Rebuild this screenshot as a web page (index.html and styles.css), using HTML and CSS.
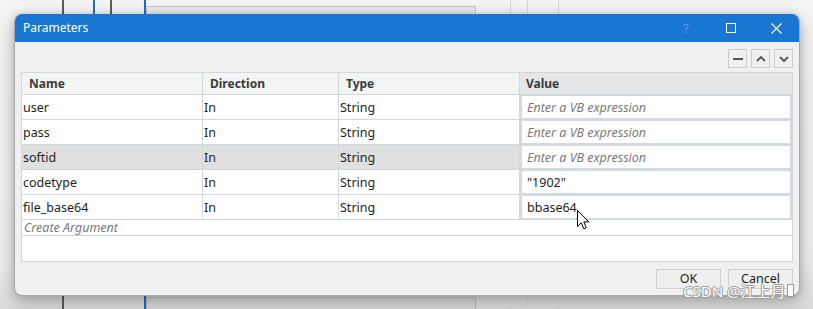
FILE: index.html
```html
<!DOCTYPE html>
<html lang="en">
<head>
  <meta charset="UTF-8">
  <title>Parameters</title>
  <link rel="stylesheet" href="styles.css">
</head>
<body>
  <!-- designer canvas behind the modal -->
  <div class="backdrop">
    <span class="rail dark" style="left:62px"></span>
    <span class="rail blue short" style="left:93px"></span>
    <span class="rail dark short" style="left:110px"></span>
    <span class="rail blue" style="left:144px"></span>
    <span class="panel"></span>
    <span class="panel lower"></span>
    <span class="rail thin" style="left:510px"></span>
    <span class="rail thin" style="left:527px"></span>
    <span class="rail thin" style="left:558px"></span>
  </div>

  <div class="dialog">
    <div class="titlebar">
      <span class="title">Parameters</span>
      <span class="tb-btn help">?</span>
      <span class="tb-btn">
        <svg width="10" height="10" viewBox="0 0 10 10"><rect x="0.5" y="0.5" width="9" height="9" fill="none" stroke="#fff" stroke-width="1"/></svg>
      </span>
      <span class="tb-btn">
        <svg width="11" height="11" viewBox="0 0 11 11"><path d="M0.5 0.5 L10.5 10.5 M10.5 0.5 L0.5 10.5" stroke="#fff" stroke-width="1.1"/></svg>
      </span>
    </div>

    <div class="body">
      <div class="toolbar">
        <button class="tool">
          <svg width="12" height="12" viewBox="0 0 12 12"><path d="M1 6 H11" stroke="#555" stroke-width="2"/></svg>
        </button>
        <button class="tool">
          <svg width="12" height="12" viewBox="0 0 12 12"><path d="M2 8 L6 4 L10 8" fill="none" stroke="#555" stroke-width="1.8"/></svg>
        </button>
        <button class="tool">
          <svg width="12" height="12" viewBox="0 0 12 12"><path d="M2 4 L6 8 L10 4" fill="none" stroke="#555" stroke-width="1.8"/></svg>
        </button>
      </div>

      <div class="grid">
        <div class="cell head">Name</div>
        <div class="cell head">Direction</div>
        <div class="cell head">Type</div>
        <div class="cell head value-head">Value</div>

        <div class="cell">user</div>
        <div class="cell">In</div>
        <div class="cell">String</div>
        <div class="cell val"><div class="expr placeholder">Enter a VB expression</div></div>

        <div class="cell">pass</div>
        <div class="cell">In</div>
        <div class="cell">String</div>
        <div class="cell val"><div class="expr placeholder">Enter a VB expression</div></div>

        <div class="cell sel">softid</div>
        <div class="cell sel">In</div>
        <div class="cell sel">String</div>
        <div class="cell val"><div class="expr placeholder">Enter a VB expression</div></div>

        <div class="cell">codetype</div>
        <div class="cell">In</div>
        <div class="cell">String</div>
        <div class="cell val"><div class="expr">"1902"</div></div>

        <div class="cell">file_base64</div>
        <div class="cell">In</div>
        <div class="cell">String</div>
        <div class="cell val"><div class="expr">bbase64</div></div>

        <div class="create">Create Argument</div>
        <div class="empty"></div>
      </div>

      <div class="footer">
        <button class="btn">OK</button>
        <button class="btn">Cancel</button>
      </div>
    </div>
  </div>

  <svg class="cursor" width="13" height="20" viewBox="0 0 13 20">
    <path d="M0.5 0.5 L0.5 16.5 L4.3 12.8 L6.8 18.8 L9.3 17.8 L6.8 11.9 L11.8 11.9 Z" fill="#fff" stroke="#000" stroke-width="1"/>
  </svg>

  <div class="watermark">CSDN @江上月</div>
</body>
</html>
```

FILE: styles.css
```css
* {
  margin: 0;
  padding: 0;
  box-sizing: border-box;
}

body {
  width: 813px;
  height: 309px;
  overflow: hidden;
  position: relative;
  background: linear-gradient(180deg, #f4f4f4 0%, #eeeeee 85%, #dcdcdc 100%);
  font-family: "Segoe UI", "Noto Sans", "Open Sans", sans-serif;
  font-size: 12px;
  color: #1e1e1e;
}

/* background canvas */
.backdrop {
  position: absolute;
  inset: 0;
  overflow: hidden;
}

.rail {
  position: absolute;
  top: 0;
  bottom: 0;
  width: 2px;
}

.rail.short { bottom: auto; height: 20px; }
.rail.dark { background: #5a5a5a; }
.rail.blue { background: #1c6fc8; }
.rail.thin { width: 1px; background: #d8d8d8; }

.panel {
  position: absolute;
  left: 146px;
  top: 6px;
  width: 330px;
  height: 40px;
  background: #e9e9e9;
  border: 1px solid #c2c7cc;
}

.panel.lower {
  top: 297px;
  height: 12px;
  border-bottom: none;
  background: #d9d9d9;
  border-color: #b9bdc1;
}

/* dialog */
.dialog {
  position: absolute;
  left: 14px;
  top: 14px;
  width: 786px;
  height: 282px;
  background: #f0f0f0;
  border: 1px solid #a9a9a9;
  border-top: none;
  border-radius: 8px;
  overflow: hidden;
  box-shadow: 0 6px 18px rgba(0, 0, 0, 0.28), 0 0 6px rgba(0, 0, 0, 0.12);
}

.titlebar {
  height: 28px;
  background: #1976d2;
  color: #fff;
  display: flex;
  align-items: center;
  padding-left: 8px;
}

.title {
  flex: 1;
  font-size: 12px;
  padding-bottom: 1px;
}

.tb-btn {
  width: 44px;
  height: 28px;
  display: flex;
  align-items: center;
  justify-content: center;
}

.tb-btn.help {
  color: #5c9ee3;
  font-size: 13px;
  width: 38px;
  margin-right: 4px;
}

.tb-btn:last-child {
  width: 46px;
  margin-right: 0;
}

.body {
  padding: 7px 6px 0 6px;
}

.toolbar {
  display: flex;
  justify-content: flex-end;
  gap: 4px;
  height: 19px;
  margin-bottom: 4px;
}

.tool {
  width: 19px;
  height: 19px;
  background: #f0f0f0;
  border: 1px solid #cbcbcb;
  display: flex;
  align-items: center;
  justify-content: center;
}

/* argument grid */
.grid {
  display: grid;
  grid-template-columns: 181px 136px 181px 1fr;
  border: 1px solid #d0d7dd;
  background: #fff;
  height: 190px;
  align-content: start;
  font-size: 12.5px;
}

.cell {
  height: 25px;
  border-right: 1px solid #d0d7dd;
  border-bottom: 1px solid #d0d7dd;
  padding-left: 1px;
  display: flex;
  align-items: center;
  white-space: nowrap;
}

.cell:nth-child(4n) {
  border-right: none;
}

.cell.head {
  height: 22px;
  background: #f3f4f4;
  font-weight: 700;
  font-size: 12px;
  color: #3a3a3a;
  padding-left: 7px;
}

.cell.head.value-head {
  background: #e5e6e8;
  padding-left: 6px;
}

.cell.sel {
  background: #e0e0e0;
}

.cell.val {
  background: #d3dadf;
  padding: 1px 2px 2px 2px;
  border-bottom: none;
}

.expr {
  width: 100%;
  height: 100%;
  background: #fff;
  display: flex;
  align-items: center;
  padding-left: 5px;
}

.placeholder {
  font-style: italic;
  color: #7a7a7a;
}

.create {
  grid-column: 1 / -1;
  height: 16px;
  border-bottom: 1px solid #d0d7dd;
  padding-left: 2px;
  font-style: italic;
  color: #7a7a7a;
  line-height: 15px;
}

.empty {
  grid-column: 1 / -1;
}

.footer {
  display: flex;
  justify-content: flex-end;
  gap: 7px;
  margin-top: 7px;
}

.btn {
  width: 65px;
  height: 20px;
  background: #efefef;
  border: 1px solid #cfcfcf;
  font-family: inherit;
  font-size: 12.5px;
  color: #1e1e1e;
  padding-bottom: 1px;
}

/* overlays */
.cursor {
  position: absolute;
  left: 577px;
  top: 210px;
}

.watermark {
  position: absolute;
  left: 683px;
  top: 280px;
  font-family: "Noto Sans", "Noto Sans CJK SC", sans-serif;
  font-size: 15px;
  color: #fff;
  text-shadow: -1px 0 #9a9a9a, 1px 0 #9a9a9a, 0 -1px #9a9a9a, 0 1px #9a9a9a;
  white-space: nowrap;
}

.watermark::after {
  content: '';
  display: inline-block;
  width: 5px;
  height: 11px;
  margin-left: 2px;
  border: 1px solid #9a9a9a;
  background: #fff;
}
```
